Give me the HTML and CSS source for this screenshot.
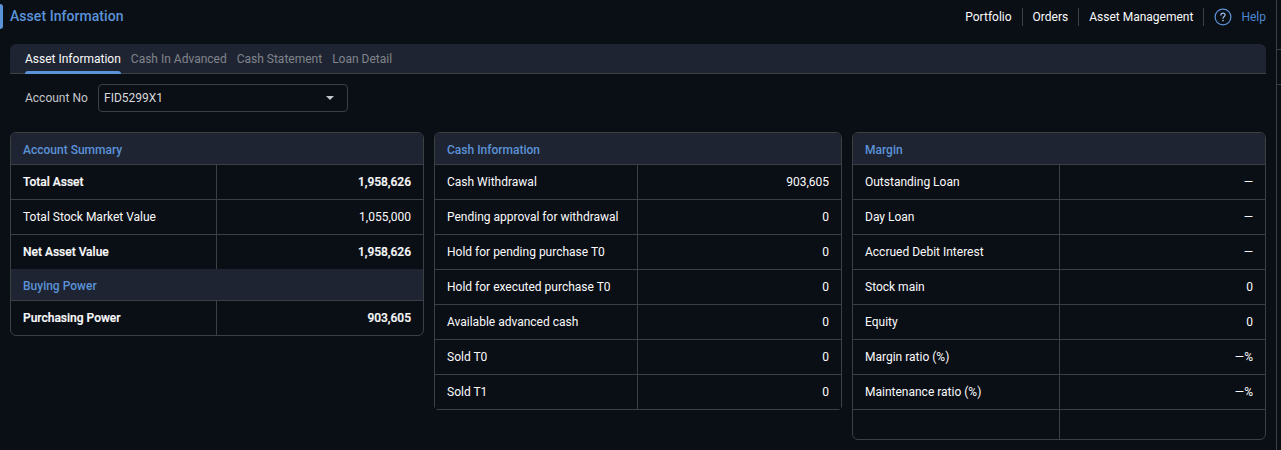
FILE: index.html
```html
<!DOCTYPE html>
<html lang="en">
<head>
<meta charset="utf-8">
<title>Asset Information</title>
<link rel="stylesheet" href="styles.css">
</head>
<body>
<div class="app">
  <main class="main">
    <header class="topbar">
      <div class="title-wrap">
        <span class="title-mark"></span>
        <h1 class="title">Asset Information</h1>
      </div>
      <nav class="topnav">
        <a class="topnav-link">Portfolio</a>
        <a class="topnav-link">Orders</a>
        <a class="topnav-link topnav-last">Asset Management</a>
        <span class="help">
          <svg class="help-icon" width="18" height="18" viewBox="0 0 18 18" fill="none">
            <circle cx="9" cy="9" r="7.9" stroke="#5b93d8" stroke-width="1.2"/>
            <path d="M6.9 7.1C6.9 5.9 7.8 5.1 9 5.1C10.2 5.1 11.1 5.9 11.1 7C11.1 8.4 9 8.5 9 10.3" stroke="#9cc0ea" stroke-width="1.2" stroke-linecap="round"/>
            <circle cx="9" cy="12.6" r="0.8" fill="#9cc0ea"/>
          </svg>
          <span class="help-text">Help</span>
        </span>
      </nav>
    </header>

    <div class="tabs">
      <span class="tab tab-active">Asset Information</span>
      <span class="tab">Cash In Advanced</span>
      <span class="tab">Cash Statement</span>
      <span class="tab">Loan Detail</span>
    </div>

    <div class="filter">
      <label class="filter-label">Account No</label>
      <div class="select">
        <span>FID5299X1</span>
        <span class="caret"></span>
      </div>
    </div>

    <div class="cards">
      <section class="card">
        <h2 class="card-head">Account Summary</h2>
        <div class="row strong"><div class="cell">Total Asset</div><div class="cell num">1,958,626</div></div>
        <div class="row"><div class="cell">Total Stock Market Value</div><div class="cell num">1,055,000</div></div>
        <div class="row strong no-line"><div class="cell">Net Asset Value</div><div class="cell num">1,958,626</div></div>
        <h2 class="card-head">Buying Power</h2>
        <div class="row strong last"><div class="cell">Purchasing Power</div><div class="cell num">903,605</div></div>
      </section>

      <section class="card card-mid">
        <h2 class="card-head">Cash Information</h2>
        <div class="row"><div class="cell">Cash Withdrawal</div><div class="cell num">903,605</div></div>
        <div class="row"><div class="cell">Pending approval for withdrawal</div><div class="cell num">0</div></div>
        <div class="row"><div class="cell">Hold for pending purchase T0</div><div class="cell num">0</div></div>
        <div class="row"><div class="cell">Hold for executed purchase T0</div><div class="cell num">0</div></div>
        <div class="row"><div class="cell">Available advanced cash</div><div class="cell num">0</div></div>
        <div class="row"><div class="cell">Sold T0</div><div class="cell num">0</div></div>
        <div class="row last"><div class="cell">Sold T1</div><div class="cell num">0</div></div>
      </section>

      <section class="card card-right">
        <h2 class="card-head">Margin</h2>
        <div class="row"><div class="cell">Outstanding Loan</div><div class="cell num">—</div></div>
        <div class="row"><div class="cell">Day Loan</div><div class="cell num">—</div></div>
        <div class="row"><div class="cell">Accrued Debit Interest</div><div class="cell num">—</div></div>
        <div class="row"><div class="cell">Stock main</div><div class="cell num">0</div></div>
        <div class="row"><div class="cell">Equity</div><div class="cell num">0</div></div>
        <div class="row"><div class="cell">Margin ratio (%)</div><div class="cell num">—%</div></div>
        <div class="row"><div class="cell">Maintenance ratio (%)</div><div class="cell num">—%</div></div>
        <div class="row last row-empty"><div class="cell"></div><div class="cell num"></div></div>
      </section>
    </div>
  </main>
  <aside class="rail">
    <div class="rail-seg rail-a"></div>
    <div class="rail-seg rail-b"></div>
    <div class="rail-seg"></div>
  </aside>
</div>
</body>
</html>
```
FILE: styles.css
```css
* { box-sizing: border-box; }
html, body { margin: 0; height: 100%; overflow: hidden; }
body {
  background: #0a0e15;
  color: #fafbfc;
  font-family: Roboto, "Liberation Sans", sans-serif;
  font-size: 12px;
  line-height: 14px;
}
.app { display: flex; height: 450px; }
.main { width: 1276px; flex: none; }

.rail { flex: 1; border-left: 1px solid #3c3f44; display: flex; flex-direction: column; }
.rail-seg { border-bottom: 1px solid #3c3f44; }
.rail-a { height: 50px; }
.rail-b { height: 35px; }
.rail-seg:last-child { border-bottom: 0; flex: 1; }

.topbar { height: 44px; display: flex; justify-content: space-between; padding: 4px 10px 0 0; align-items: flex-start; }
.title-wrap { display: flex; align-items: center; height: 25px; gap: 7px; }
.title-mark { width: 3px; height: 25px; background: #5b93d8; border-radius: 0 3px 3px 0; }
.title { margin: 0; font-size: 14px; font-weight: 500; color: #5b93d8; line-height: 16px; letter-spacing: 0.05px; position: relative; top: -1px; }

.topnav { display: flex; align-items: center; height: 26px; }
.topnav-link { color: #fafbfc; padding: 0 10px; height: 18px; line-height: 18px; border-right: 1px solid #3c3f44; }
.help { display: flex; align-items: center; gap: 9px; padding-left: 10px; }
.help-text { color: #4d87d0; }

.tabs {
  margin-left: 10px; width: 1256px; height: 30px;
  background: #1f2432;
  border-bottom: 1px solid #3c3f44;
  border-radius: 6px 6px 0 0;
  display: flex; gap: 10px; padding: 0 15px;
}
.tab { color: #80848c; height: 30px; line-height: 30px; position: relative; }
.tab-active { color: #fafbfc; }
.tab-active::after {
  content: ""; position: absolute; left: 0; right: 0; bottom: 0; height: 3px;
  background: #5b93d8; border-radius: 3px 3px 0 0;
}

.filter { display: flex; align-items: center; height: 28px; margin: 10px 0 20px 25px; }
.filter-label { color: #c4c7cc; width: 73px; }
.select {
  width: 250px; height: 28px; border: 1px solid #3c3f44; border-radius: 4px;
  display: flex; align-items: center; justify-content: space-between;
  padding: 0 13px 0 5px; color: #d6d9dd;
}
.caret { width: 0; height: 0; border-left: 4px solid transparent; border-right: 4px solid transparent; border-top: 4px solid #c4c7cc; }

.cards { display: grid; grid-template-columns: 414px 408px 414px; gap: 10px; margin-left: 10px; align-items: start; }
.card { border: 1px solid #3c3f44; border-radius: 6px; overflow: hidden; }
.card-mid {
  border-radius: 6px 6px 0 0;
  clip-path: polygon(0 0, 100% 0, 100% calc(100% - 3px), calc(100% - 3px) 100%, 3px 100%, 0 calc(100% - 3px));
}
.card-head {
  margin: 0; height: 32px; padding: 0 12px; background: #1f2432;
  border-bottom: 1px solid #3c3f44;
  font-size: 12px; font-weight: 500; line-height: 35px; color: #5b93d8;
}
.row { display: grid; grid-template-columns: 205px 1fr; height: 35px; border-bottom: 1px solid #3c3f44; }
.card-mid .row { grid-template-columns: 202px 1fr; }
.card-right .row { grid-template-columns: 206px 1fr; }
.row.last, .row.no-line { border-bottom: 0; height: 34px; }
.row-empty.last { height: 29px; }
.cell { padding: 0 12px; line-height: 34px; color: #fafbfc; }
.num { border-left: 1px solid #3c3f44; text-align: right; }
.strong .cell { font-weight: 500; -webkit-text-stroke: 0.2px #fafbfc; }
```
